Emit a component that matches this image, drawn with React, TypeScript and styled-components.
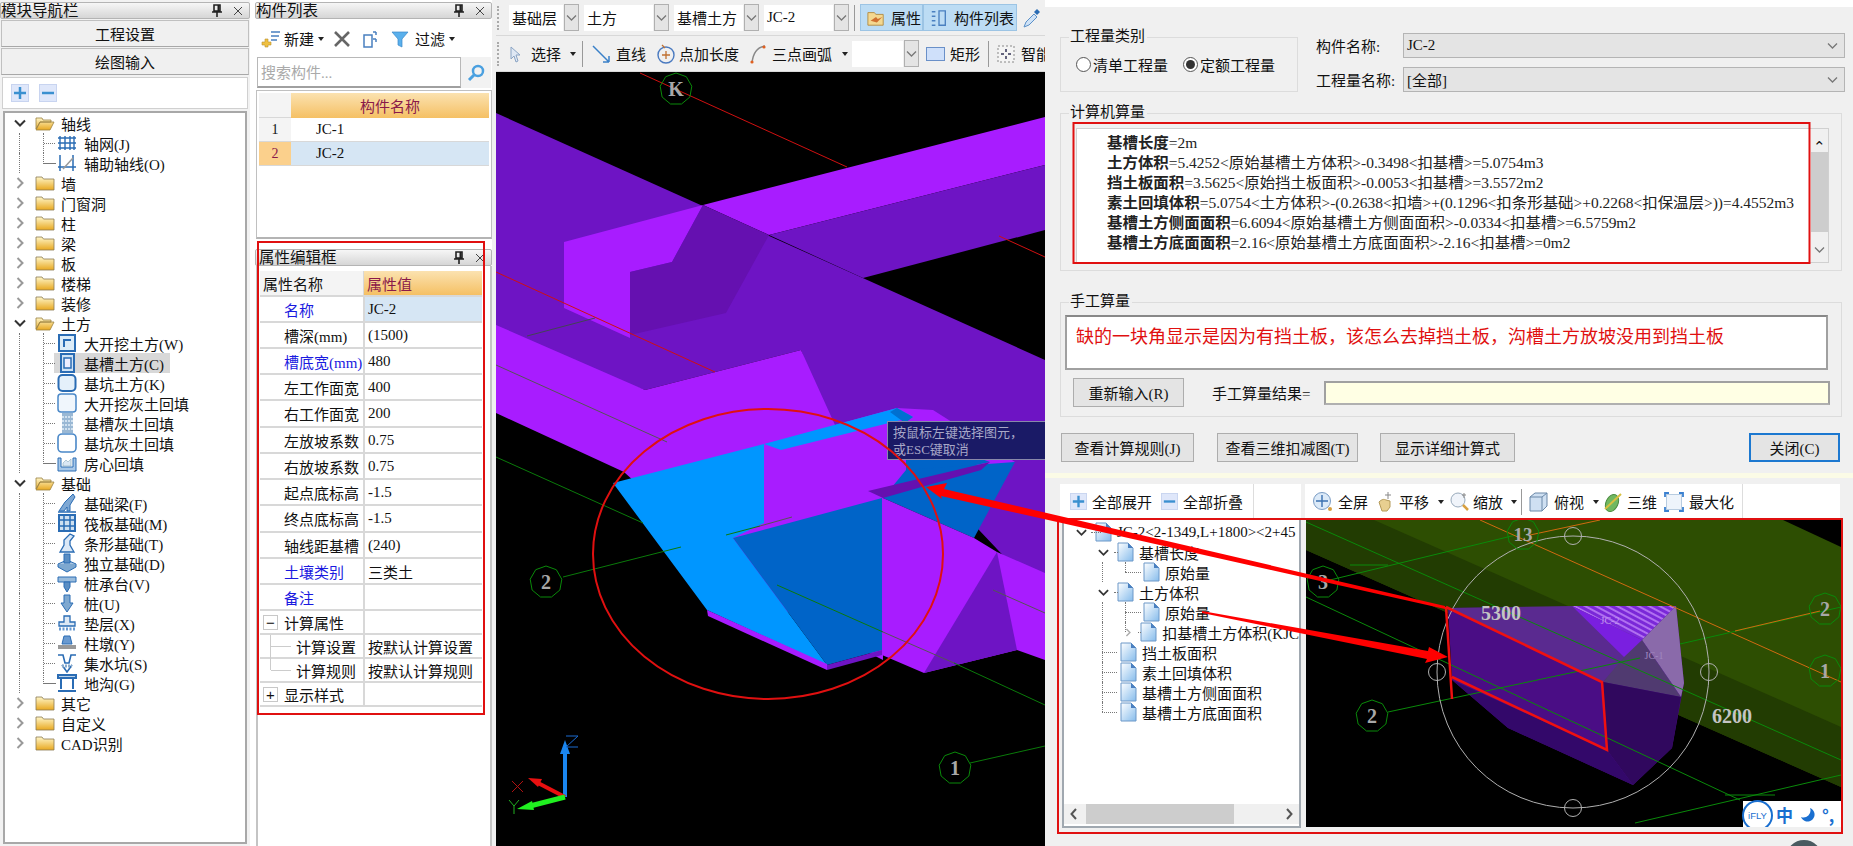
import React from 'react';
import styled, { createGlobalStyle } from 'styled-components';

const UI = '"Liberation Serif", "Noto Sans CJK SC", serif';
const Global = createGlobalStyle`
  html, body { margin: 0; padding: 0; background: #fff; }
  body { font-family: ${UI}; font-size: 15px; color: #111; }
  * { box-sizing: border-box; }
`;

const Page = styled.div`
  position: relative; display: flex; width: 1853px; height: 846px; overflow: hidden; background: #fff;
`;

/* ---------- docking panels ---------- */
const NavColumn = styled.div`
  width: 250px; flex: none; padding-top: 2px; display: flex; flex-direction: column; background: #f2f2f2;
`;
const MidColumn = styled.div`
  width: 237px; flex: none; margin-left: 5px; padding-top: 2px; display: flex; flex-direction: column;
`;
const TitleBar = styled.div`
  height: 17px; flex: none; display: flex; align-items: center; justify-content: space-between;
  background: linear-gradient(#f6f6f6, #d6d6d6); border: 1px solid #b4b4b4; border-radius: 2px;
  font-size: 15.5px; line-height: 15px; white-space: nowrap; padding-right: 5px; overflow: hidden;
`;
const TitleIcons = styled.div`display: flex; align-items: center; gap: 10px;`;
const NavButton = styled.div`
  height: 27px; margin: 1px 1px 0; flex: none; display: flex; align-items: center; justify-content: center;
  background: #f0f0f0; border: 1px solid #c0c0c0; border-bottom-color: #a8a8a8; font-size: 15px;
`;
const ExpandBar = styled.div`
  height: 32px; margin: 2px 2px 0; flex: none; background: #fff; display: flex; align-items: center; gap: 10px; padding-left: 8px;
  border: 1px solid #d0d0d0;
`;
const TreeBox = styled.div`
  flex: 1; margin: 2px 3px 2px; background: #fff; border: 2px solid #a8a8a8; border-bottom-width: 2px;
`;
const RootRow = styled.div`
  height: 20px; display: flex; align-items: center; padding-left: 5px; gap: 0; position: relative;
`;
const Chevron = styled.span`width: 20px; flex: none; display: flex; justify-content: center;`;
const FolderSlot = styled.span`margin-left: 5px; display: flex;`;
const RootLabel = styled.span`margin-left: 6px; font-size: 15px; white-space: nowrap;`;
const ChildRow = styled.div<{ $last?: boolean }>`
  height: 20px; display: flex; align-items: center; padding-left: 49px; position: relative;
  &::before { content: ''; position: absolute; left: 14px; top: 0; bottom: 0; border-left: 1px dotted #777; }
  &::after { content: ''; position: absolute; left: 38px; top: 0; width: 12px; height: ${p => (p.$last ? '10px' : '20px')};
    border-left: 1px dotted #777; border-bottom: ${p => (p.$last ? '1px dotted #777' : 'none')}; }
`;
const Tick = styled.i`position: absolute; left: 39px; top: 10px; width: 11px; border-top: 1px dotted #777;`;
const Chip = styled.span<{ $on?: boolean }>`
  display: flex; align-items: center; height: 20px; padding: 0 6px 0 3px; gap: 7px; white-space: nowrap; font-size: 15px;
  background: ${p => (p.$on ? '#d8d8d8' : 'transparent')};
`;

const ListBar = styled.div`
  height: 33px; margin-top: 3px; display: flex; align-items: center; background: #fff; padding-left: 6px; font-size: 15px; flex: none;
`;
const BarText = styled.span<{ $ml?: number }>`margin-left: ${p => p.$ml ?? 3}px; white-space: nowrap;`;
const BarSlot = styled.span<{ $ml: number }>`margin-left: ${p => p.$ml}px; display: flex;`;
const Caret = styled.span`
  display: inline-block; width: 0; height: 0; border-left: 3.5px solid transparent; border-right: 3.5px solid transparent;
  border-top: 4px solid #222; margin-left: 4px; flex: none;
`;
const SearchRow = styled.div`height: 31px; flex: none; display: flex; margin: 2px 1px 0 2px; background: #f2f2f2;`;
const SearchInput = styled.div`
  width: 204px; background: #fff; border: 1px solid #b8b8b8; border-bottom: 2px solid #a0a0a0; color: #aaa; font-size: 15px; padding: 3px 3px;
`;
const SearchBtn = styled.div`flex: 1; display: flex; align-items: center; justify-content: center;`;
const ListBox = styled.div`
  height: 149px; flex: none; margin: 2px 0 0 1px; background: #fff; border: 1px solid #c0c0c0; border-bottom: 2px solid #b4b4b4; padding: 2px 2px 0 2px;
`;
const ListHead = styled.div`display: flex; height: 25px;`;
const IndexCell = styled.div<{ $active?: boolean }>`
  width: 32px; flex: none; display: flex; align-items: center; justify-content: center; font-size: 14px;
  background: ${p => (p.$active ? '#fbd08c' : '#f4f4f4')}; border-bottom: 1px solid #d8d8d8; color: ${p => (p.$active ? '#8a1a4a' : '#111')};
`;
const OrangeHead = styled.div`
  flex: 1; display: flex; align-items: center; justify-content: center; color: #8a1a4a; font-size: 15px;
  background: linear-gradient(#fbe2b0, #f5c064);
`;
const ListRow = styled.div`display: flex; height: 24px;`;
const ListName = styled.div<{ $active?: boolean }>`
  flex: 1; display: flex; align-items: center; padding-left: 25px; font-size: 15px;
  background: ${p => (p.$active ? '#d6e6f4' : '#fff')}; border-bottom: 1px solid #d8d8d8;
`;
const PropTitle = styled(TitleBar)`margin-top: 10px; padding-left: 3px;`;
const PropBody = styled.div`
  flex: 1; margin: 0 0 0 1px; background: #fff; border-left: 2px solid #c4c4c4; border-right: 2px solid #c4c4c4; padding: 5px 0 0 2px;
`;
const PropHead = styled.div`display: grid; grid-template-columns: 103px 119px; height: 26px; border-bottom: 2px solid #d8d8d8; width: 222px;`;
const PropHeadName = styled.div`background: #f4f4f4; padding-left: 3px; display: flex; align-items: center; font-size: 15px;`;
const PropHeadVal = styled.div`background: linear-gradient(#fbe2b0, #f5c064); color: #8a1a4a; padding-left: 3px; display: flex; align-items: center; font-size: 15px; border-left: 1px solid #d8d8d8;`;
const PropRow = styled.div<{ $h?: number }>`
  display: grid; grid-template-columns: 103px 119px; width: 222px; height: ${p => p.$h ?? 26}px; border-bottom: 2px solid #d8d8d8;
`;
const PropName = styled.div<{ $blue?: boolean; $indent?: number }>`
  padding-left: ${p => p.$indent ?? 24}px; display: flex; align-items: center; white-space: nowrap; font-size: 15px; position: relative;
  color: ${p => (p.$blue ? '#1a1ae0' : '#111')};
`;
const PropVal = styled.div<{ $sel?: boolean }>`
  padding-left: 3px; display: flex; align-items: center; white-space: nowrap; font-size: 15px; border-left: 2px solid #d8d8d8;
  background: ${p => (p.$sel ? '#d6e6f4' : '#fff')};
`;
const Toggle = styled.span`
  position: absolute; left: 3px; top: 4px; width: 15px; height: 15px; border: 1px solid #c8c8c8; display: flex; align-items: center; justify-content: center;
  font-size: 15px; line-height: 13px; font-family: "Liberation Sans", sans-serif; background: #fff;
`;
const Branch = styled.i<{ $end?: boolean }>`
  position: absolute; left: 10px; top: 0; width: 22px; height: ${p => (p.$end ? '11px' : '24px')}; border-left: 1px solid #ccc;
  &::after { content: ''; position: absolute; left: 0; top: 11px; width: 20px; border-top: 1px solid #ccc; }
`;

/* ---------- centre ---------- */
const Center = styled.div`
  width: 553px; flex: none; display: flex; flex-direction: column; padding-left: 4px; background: #f0f0f0;
`;
const ToolRow = styled.div<{ $h: number }>`
  height: ${p => p.$h}px; flex: none; display: flex; align-items: center; font-size: 15px; position: relative; overflow: hidden; white-space: nowrap; border-bottom: 1px solid #d8d8d8;
`;
const Grip = styled.i`width: 3px; height: 24px; margin: 0 9px 0 1px; flex: none; border-left: 2px dotted #aaa;`;
const Combo = styled.div<{ $w: number; $ml?: number }>`
  width: ${p => p.$w}px; height: 26px; flex: none; background: #fff; display: flex; align-items: center; padding-left: 3px; font-size: 15px; margin-left: ${p => p.$ml ?? 0}px;
`;
const ComboBtn = styled.div`
  width: 15px; height: 27px; flex: none; display: flex; align-items: center; justify-content: center; background: #e4e4e4; border: 1px solid #b0b0b0; margin-left: 1px;
`;
const VSep = styled.i<{ $mx?: number }>`width: 1px; height: 26px; flex: none; background: #999; margin: 0 ${p => p.$mx ?? 5}px;`;
const ActiveBtn = styled.div<{ $w: number }>`
  width: ${p => p.$w}px; height: 27px; flex: none; display: flex; align-items: center; gap: 5px; padding-left: 5px; background: #bcdcf4; border: 1px solid #9cc4e4;
`;
const TB = styled.div<{ $w?: number; $gap?: number; $ml?: number }>`
  display: flex; align-items: center; flex: none; gap: ${p => p.$gap ?? 5}px; width: ${p => (p.$w ? p.$w + 'px' : 'auto')}; margin-left: ${p => p.$ml ?? 0}px;
`;
const CanvasWrap = styled.div`position: relative; flex: 1; background: #000; overflow: hidden;`;
const CanvasSvg = styled.svg`display: block;`;
const Hint = styled.div`
  position: absolute; left: 391px; top: 349px; width: 170px; height: 39px; background: #1a1a66; border: 1px solid #8888aa; color: #a8a8c8;
  font-size: 13px; line-height: 17px; padding: 2px 5px; white-space: nowrap;
`;

/* ---------- dialog ---------- */
const Dialog = styled.div`
  width: 808px; flex: none; background: #f0f0f0; display: flex; flex-direction: column;
`;
const WhiteStrip = styled.div`height: 7px; flex: none; background: #fff;`;
const TopRow = styled.div`display: flex; margin: 30px 0 0 15px; height: 55px;`;
const Group = styled.div<{ $w?: number; $h: number; $mt?: number; $ml?: number }>`
  position: relative; width: ${p => (p.$w ? p.$w + 'px' : 'auto')}; height: ${p => p.$h}px; border: 1px solid #dcdcdc; flex: none; margin-top: ${p => p.$mt ?? 0}px; margin-left: ${p => p.$ml ?? 0}px;
`;
const GroupWide = styled(Group)`width: 782px;`;
const Legend = styled.span`
  position: absolute; left: 8px; top: -10px; background: #f0f0f0; padding: 0 2px 0 1px; font-size: 15px; line-height: 17px; white-space: nowrap;
`;
const RadioRow = styled.div`display: flex; align-items: center; margin: 16px 0 0 15px; font-size: 15px; white-space: nowrap;`;
const RadioGap = styled.span`width: 15px;`;
const Radio = styled.span<{ $on?: boolean }>`
  width: 15px; height: 15px; border-radius: 50%; border: 1px solid #555; background: #fff; flex: none; margin-right: 2px; display: flex; align-items: center; justify-content: center;
  &::after { content: ''; width: 9px; height: 9px; border-radius: 50%; background: ${p => (p.$on ? '#333' : 'transparent')}; }
`;
const Fields = styled.div`margin-left: 18px; margin-top: -4px; display: flex; flex-direction: column; gap: 9px;`;
const Field = styled.div`display: flex; align-items: center; height: 25px;`;
const FieldLabel = styled.span`width: 87px; flex: none; font-size: 15px; white-space: nowrap;`;
const FieldSelect = styled.div`
  width: 442px; height: 25px; background: #e4e4e4; border: 1px solid #b4b4b4; display: flex; align-items: center; justify-content: space-between; padding: 0 6px 0 3px; font-size: 15px;
`;
const CalcBox = styled.div`
  position: absolute; left: 15px; top: 14px; width: 753px; height: 135px; background: #fff; border: 1px solid #d0d0d0; padding: 4px 0 0 30px; font-size: 15px; line-height: 20px; white-space: nowrap;
`;
const CalcLine = styled.div`height: 20px; color: #222; transform-origin: left; transform: scaleX(1.03);`;
const CalcScroll = styled.div`
  position: absolute; right: 0; top: 0; bottom: 0; width: 17px; background: #f0f0f0; display: flex; flex-direction: column; justify-content: space-between; align-items: center; padding: 8px 0;
`;
const CalcThumb = styled.i`position: absolute; left: 0; top: 23px; width: 17px; height: 80px; background: #cdcdcd;`;
const Manual = styled.div`
  position: absolute; left: 4px; top: 12px; width: 763px; height: 55px; background: #fff; border: 2px solid #a0a0a0; border-top-color: #888; color: #e01010;
  font-family: "Noto Sans CJK SC", sans-serif; font-size: 18px; line-height: 24px; padding: 6px 9px; white-space: nowrap;
`;
const ManualRow = styled.div`position: absolute; left: 12px; top: 75px; display: flex; align-items: center;`;
const ResultLabel = styled.span`margin-left: 28px; width: 109px; white-space: nowrap; font-size: 15px;`;
const Btn = styled.div<{ $w: number; $h?: number; $ml?: number; $primary?: boolean }>`
  width: ${p => p.$w}px; height: ${p => p.$h ?? 29}px; flex: none; margin-left: ${p => p.$ml ?? 0}px; display: flex; align-items: center; justify-content: center; white-space: nowrap;
  background: #e4e4e4; border: ${p => (p.$primary ? '2px solid #1c78d0' : '1px solid #adadad')}; font-size: 15px;
`;
const ResultInput = styled.div`width: 506px; height: 24px; margin-left: 3px; background: #ffffe4; border: 2px solid #a0a0a0; border-bottom-color: #b0b0b0; flex: none;`;
const ButtonRow = styled.div`display: flex; margin: 16px 0 0 16px;`;
const CreamBand = styled.div`height: 5px; flex: none; margin-top: 11px; background: #fbfbe6;`;
const StripRow = styled.div`display: flex; margin: 6px 0 0 15px; height: 35px; flex: none;`;
const LeftStrip = styled.div`
  width: 241px; flex: none; background: #fff; display: flex; align-items: center; padding-left: 10px; font-size: 15px; white-space: nowrap; position: relative;
`;
const StripText = styled.span`margin-left: 5px;`;
const StripSlot = styled.span`margin-left: 9px; display: flex;`;
const StripDivider = styled.i`position: absolute; left: 193px; top: 0; bottom: 0; width: 1px; background: #ddd;`;
const RightStrip = styled.div`
  width: 535px; flex: none; margin-left: 4px; background: #fff; display: flex; align-items: center; padding-left: 7px; font-size: 15px; white-space: nowrap; position: relative;
`;
const StripDividerR = styled.i`position: absolute; left: 437px; top: 0; bottom: 0; width: 1px; background: #ddd;`;
const PaneRow = styled.div`display: flex; margin: 0 0 0 17px; height: 309px; flex: none;`;
const DocTree = styled.div`
  width: 239px; flex: none; background: #fff; border: 2px solid #a0a8b0; border-top: none; position: relative; overflow: hidden;
`;
const DocRow = styled.div<{ $pad: number }>`
  height: 20px; display: flex; align-items: center; padding-left: ${p => p.$pad}px; font-size: 15px; white-space: nowrap; gap: 4px; position: relative;
`;
const DocIconSlot = styled.span<{ $chev: boolean }>`margin-left: ${p => (p.$chev ? 4 : 0)}px; display: flex;`;
const DocText = styled.span`margin-left: 1px;`;
const VDots = styled.i<{ $x: number; $half?: boolean }>`
  position: absolute; left: ${p => p.$x}px; top: 0; height: ${p => (p.$half ? 10 : 20)}px; border-left: 1px dotted #777;
`;
const HDots = styled.i<{ $x: number; $w: number }>`
  position: absolute; left: ${p => p.$x}px; top: 10px; width: ${p => p.$w}px; border-top: 1px dotted #777;
`;
const DocRows = styled.div`padding-top: 3px;`;
const DocScroll = styled.div`
  position: absolute; left: 0; right: 0; bottom: 2px; height: 20px; background: #f0f0f0; display: flex; align-items: center; justify-content: space-between; padding: 0 6px;
`;
const DocThumb = styled.i`position: absolute; left: 22px; top: 0; bottom: 0; width: 148px; background: #cdcdcd;`;
const MiniCanvas = styled.div`width: 535px; height: 307px; flex: none; margin-left: 5px; margin-top: 1px; background: #000; position: relative; overflow: hidden;`;
const ImeBar = styled.div`
  position: absolute; right: 0; bottom: 0; left: 437px; height: 26px; background: #fff; display: flex; align-items: center; gap: 7px; padding-left: 33px;
  color: #1a6fd0; font-size: 17px; font-weight: 700; font-family: "Noto Sans CJK SC", sans-serif;
`;
const ImeBadge = styled.div`
  position: absolute; left: -1px; bottom: -4px; width: 31px; height: 31px; border-radius: 50%; background: #fff; border: 2px solid #1a6fd0;
  display: flex; align-items: center; justify-content: center; font-family: "Liberation Sans", sans-serif; font-size: 9.5px; font-weight: 400;
`;
const Overlay = styled.svg`position: absolute; left: 0; top: 0; width: 1853px; height: 846px; pointer-events: none; z-index: 5;`;
const Dome = styled.i`position: absolute; left: 1786px; top: 840px; width: 36px; height: 36px; border-radius: 50%; background: #4a5a60;`;
const NoShrink = styled.svg`flex: none;`;

/* ---------- icons ---------- */
const Pin = () => (
  <svg width="10" height="13" viewBox="0 0 10 13"><path d="M2 1h6v6H2zM0 8h10M5 8v5" fill="none" stroke="#222" strokeWidth="1.6" /><path d="M5.5 1h2v6h-2z" fill="#222" /></svg>
);
const CloseX = () => (
  <svg width="12" height="12" viewBox="0 0 12 12"><path d="M2 2l8 8M10 2l-8 8" stroke="#444" strokeWidth="1" /></svg>
);
const Chev = ({ open, gray, size = 12 }: { open?: boolean; gray?: boolean; size?: number }) => (
  <svg width={size} height={size} viewBox="0 0 12 12">
    <path d={open ? 'M1 3.5l5 5 5-5' : 'M3.5 1l5 5-5 5'} fill="none" stroke={gray ? '#aaa' : open ? '#333' : '#999'} strokeWidth="2" />
  </svg>
);
const Folder = ({ open }: { open?: boolean }) => (
  <NoShrink width="20" height="16" viewBox="0 0 20 16">
    <defs><linearGradient id="fg" x1="0" y1="0" x2="0" y2="1"><stop offset="0" stopColor="#fff6c8" /><stop offset="1" stopColor="#e8a820" /></linearGradient></defs>
    {open ? (
      <path d="M1 14V3h6l1 2h8v2H5L1 14zM1 15l4-8h14l-4 8z" fill="url(#fg)" stroke="#9a8040" strokeWidth=".8" />
    ) : (
      <path d="M1 15V2h6l1.500 2H19v11z" fill="url(#fg)" stroke="#8a7a50" strokeWidth=".8" />
    )}
  </NoShrink>
);
const Doc = () => (
  <NoShrink width="17" height="20" viewBox="0 0 17 20">
    <defs><linearGradient id="dg" x1="0" y1="0" x2="1" y2="1"><stop offset="0" stopColor="#fff" /><stop offset="1" stopColor="#86bcec" /></linearGradient></defs>
    <path d="M1 1h10l5 5v13H1z" fill="url(#dg)" stroke="#6c98c8" /><path d="M11 1v5h5z" fill="#4a80c0" />
  </NoShrink>
);
const B = '#2a6cb4';
const navIcons: Record<string, React.ReactNode> = {
  grid: <path d="M3 3v14M8 3v14M13 3v14M17 3v14M1 5h18M1 10h18M1 15h18" stroke={B} strokeWidth="1.4" fill="none" />,
  aux: <><path d="M3 2v16M16 2v16M1 14h18" stroke={B} strokeWidth="1.5" fill="none" /><path d="M6 16L16 5" stroke="#999" strokeWidth="1.500" /></>,
  dig: <><rect x="2" y="2" width="16" height="16" fill="#dcecf8" stroke={B} strokeWidth="2" /><path d="M7 14V7h7" fill="none" stroke={B} strokeWidth="2" /></>,
  trench: <><rect x="4" y="1" width="13" height="18" fill="#cfe2f4" stroke={B} strokeWidth="2" /><rect x="7" y="5" width="7" height="10" fill="#eef" stroke={B} strokeWidth="1.500" /></>,
  pit: <rect x="1.500" y="2" width="17" height="16" rx="4" fill="#e4f0fa" stroke={B} strokeWidth="2" />,
  bigfill: <rect x="1" y="1" width="18" height="18" rx="3" fill="#f0f6fc" stroke="#4a88c8" strokeWidth="1.500" />,
  trenchfill: <><rect x="5" y="0" width="11" height="20" fill="#9ab8d4" /><path d="M5 4h11M5 8h11M5 12h11M5 16h11" stroke="#e4eef8" strokeWidth="1.500" strokeDasharray="2 1" /></>,
  pitfill: <rect x="1" y="1" width="18" height="18" rx="4" fill="#fff" stroke="#4a88c8" strokeWidth="1.600" />,
  room: <><path d="M1 5v13h18V5h-3v9H4V5z" fill="#a8c8e8" stroke={B} /><path d="M6 10l3-3 2 2 3-3v7H6z" fill="#dbe8f4" stroke="#8ab" strokeWidth=".6" /></>,
  beam: <><path d="M2 18l6-9 8-8 2 3-5 8v6h-3v-4l-3 4z" fill="#7ea8d4" stroke={B} strokeWidth="1" /><path d="M1 19h18" stroke={B} strokeWidth="1.500" /></>,
  raft: <><rect x="2" y="2" width="16" height="16" fill="#cfe0f0" stroke={B} strokeWidth="2" /><path d="M2 7h16M2 13h16M7 2v16M13 2v16" stroke={B} strokeWidth="1.500" /></>,
  strip: <><path d="M3 19l4-7V7l6-6 4 2-4 5v4l4 7z" fill="#dbe8f6" stroke={B} strokeWidth="1.300" /></>,
  iso: <><path d="M1 11l9-4 9 4-9 6z" fill="#a8c4e0" stroke={B} /><path d="M1 11v3l9 5 9-5v-3" fill="#7ea8d0" stroke={B} /><path d="M7 1h6v9H7z" fill="#5a8ec4" stroke={B} /></>,
  cap: <><path d="M1 4h18v5H1z" fill="#9abcdc" stroke={B} /><path d="M7 9h6v5l-3 5-3-5z" fill="#5a8ec4" stroke={B} /></>,
  pile: <><path d="M7 2h6v8h3l-6 9-6-9h3z" fill="#7ea8d0" stroke={B} /></>,
  pad: <><path d="M7 3h6v6h5v4H2V9h5z" fill="#dce8f4" stroke={B} strokeWidth="1.300" /><path d="M2 16h16" stroke="#6a9ad0" strokeWidth="3" strokeDasharray="2 1.500" /></>,
  pier: <><path d="M7 3h6l2 8H5z" fill="#6a9ad0" stroke={B} /><path d="M1 12h18v4H1z" fill="#999" /></>,
  sump: <><path d="M1 2h5l2 8h4l2-8h5M5 12l5 7 5-7" fill="none" stroke={B} strokeWidth="1.600" /><path d="M5 13h10" stroke="#8ac" strokeWidth="3" strokeDasharray="2 1" /></>,
  ditch: <><path d="M1 2h18v3H1zM4 5v11M16 5v11M1 18h18" fill="#bcd4ea" stroke={B} strokeWidth="2" /></>,
};
const NavIcon = ({ kind }: { kind: string }) => (
  <NoShrink width="20" height="20" viewBox="0 0 20 20">{navIcons[kind]}</NoShrink>
);
const PlusBox = ({ minus, size = 18 }: { minus?: boolean; size?: number }) => (
  <NoShrink width={size} height={size} viewBox="0 0 18 18">
    <rect x=".5" y=".5" width="17" height="17" fill="#dfe7fa" stroke="#c8d4f0" />
    <path d={minus ? 'M3 9h12' : 'M3 9h12M9 3v12'} stroke="#3a90d0" strokeWidth="2.500" />
  </NoShrink>
);
const Mini = ({ d, w = 20, h = 20, children }: { d?: string; w?: number; h?: number; children?: React.ReactNode }) => (
  <NoShrink width={w} height={h} viewBox="0 0 20 20">{d && <path d={d} fill="none" stroke="#4a80c0" strokeWidth="1.500" />}{children}</NoShrink>
);
const SmallChev = () => (
  <svg width="11" height="8" viewBox="0 0 11 8"><path d="M1 1.500l4.500 4.500L10 1.500" fill="none" stroke="#777" strokeWidth="1.300" /></svg>
);

const ngon = (cx: number, cy: number, r: number, n = 9) =>
  Array.from({ length: n }, (_, i) => {
    const a = (i / n) * Math.PI * 2 - Math.PI / 2;
    return `${(cx + r * Math.cos(a)).toFixed(1)},${(cy + r * Math.sin(a)).toFixed(1)}`;
  }).join(' ');

const AxisTag = ({ x, y, t, r = 16, fs = 20 }: { x: number; y: number; t: string; r?: number; fs?: number }) => (
  <g>
    <polygon points={ngon(x, y, r)} fill="none" stroke="#0a8a0a" strokeWidth="1" />
    <text x={x} y={y + fs * 0.35} textAnchor="middle" fontSize={fs} fontWeight="700" fill="#a8a8a8" fontFamily='"Liberation Serif", serif'>{t}</text>
  </g>
);
type L = [number, number, number, number, string];
const Lines = ({ items, w = 1 }: { items: L[]; w?: number }) => (
  <>{items.map((l, i) => <line key={i} x1={l[0]} y1={l[1]} x2={l[2]} y2={l[3]} stroke={l[4]} strokeWidth={w} />)}</>
);

const LT = '#a81cff';
const DK = '#6e14c4';
const DK2 = '#6510b0';
const polys: [string, string][] = [
  ['496,113 1045,360 1045,600 979,530 897,440 835,445 801,350 645,390 496,340', DK],
  ['703,205 1045,117 1045,165 769,235', LT],
  ['769,235 1045,165 1045,230 863,278', DK],
  ['564,242 703,205 672,262 630,272 630,338 564,308', LT],
  ['630,272 672,262 703,205 769,235 726,313 630,335', DK2],
  ['496,325 645,390 801,350 835,425 897,408 933,410 1015,462 883,498 883,660 764,600 624,472 496,413', LT],
  ['764,444 897,408 913,417 781,450', '#0096ff'],
  ['897,408 913,417 905,423 890,412', '#0070d0'],
  ['906,432 990,462 906,480', '#0064c8'],
  ['883,498 906,470 1015,462 974,538', '#0064c8'],
  ['868,491 990,462 981,470 883,498', DK2],
  ['613,483 764,444 764,523 733,538 827,665 707,610', '#0096ff'],
  ['733,538 882,498 882,650 827,665', '#0064c8'],
  ['707,610 827,664 827,670 708,616', LT],
  ['827,665 882,650 882,655 827,670', DK],
  ['883,498 974,538 997,552 1045,573 1045,660 1017,650 924,673 882,655', LT],
  ['997,552 1017,650 924,673', DK],
];

const navTree: { t: string; open?: boolean; kids?: [string, string, boolean?][] }[] = [
  { t: '轴线', open: true, kids: [['grid', '轴网(J)'], ['aux', '辅助轴线(O)']] },
  { t: '墙' }, { t: '门窗洞' }, { t: '柱' }, { t: '梁' }, { t: '板' }, { t: '楼梯' }, { t: '装修' },
  { t: '土方', open: true, kids: [['dig', '大开挖土方(W)'], ['trench', '基槽土方(C)', true], ['pit', '基坑土方(K)'], ['bigfill', '大开挖灰土回填'], ['trenchfill', '基槽灰土回填'], ['pitfill', '基坑灰土回填'], ['room', '房心回填']] },
  { t: '基础', open: true, kids: [['beam', '基础梁(F)'], ['raft', '筏板基础(M)'], ['strip', '条形基础(T)'], ['iso', '独立基础(D)'], ['cap', '桩承台(V)'], ['pile', '桩(U)'], ['pad', '垫层(X)'], ['pier', '柱墩(Y)'], ['sump', '集水坑(S)'], ['ditch', '地沟(G)']] },
  { t: '其它' }, { t: '自定义' }, { t: 'CAD识别' },
];
const propRows: [string, string, boolean?][] = [
  ['名称', 'JC-2', true], ['槽深(mm)', '(1500)'], ['槽底宽(mm)', '480', true], ['左工作面宽', '400'], ['右工作面宽', '200'],
  ['左放坡系数', '0.75'], ['右放坡系数', '0.75'], ['起点底标高', '-1.5'], ['终点底标高', '-1.5'], ['轴线距基槽', '(240)'],
  ['土壤类别', '三类土', true], ['备注', '', true],
];
const calc: [string, string][] = [
  ['基槽长度', '=2m'],
  ['土方体积', '=5.4252<原始基槽土方体积>-0.3498<扣基槽>=5.0754m3'],
  ['挡土板面积', '=3.5625<原始挡土板面积>-0.0053<扣基槽>=3.5572m2'],
  ['素土回填体积', '=5.0754<土方体积>-(0.2638<扣墙>+(0.1296<扣条形基础>+0.2268<扣保温层>))=4.4552m3'],
  ['基槽土方侧面面积', '=6.6094<原始基槽土方侧面面积>-0.0334<扣基槽>=6.5759m2'],
  ['基槽土方底面面积', '=2.16<原始基槽土方底面面积>-2.16<扣基槽>=0m2'],
];
type DocLink = { v38?: 'full' | 'half'; v61?: 'full' | 'half'; h?: [number, number] };
const docRows: { pad: number; t: string; chev: 'open' | 'closed' | 'none'; link: DocLink }[] = [
  { pad: 12, t: 'JC-2<2-1349,L+1800><2+45', chev: 'open', link: { h: [27, 10] } },
  { pad: 34, t: '基槽长度', chev: 'open', link: { h: [50, 4] } },
  { pad: 79, t: '原始量', chev: 'none', link: { v38: 'full', v61: 'half', h: [61, 16] } },
  { pad: 34, t: '土方体积', chev: 'open', link: { h: [50, 4] } },
  { pad: 79, t: '原始量', chev: 'none', link: { v38: 'full', v61: 'full', h: [61, 16] } },
  { pad: 60, t: '扣基槽土方体积(KJC', chev: 'closed', link: { v38: 'full', v61: 'half', h: [74, 3] } },
  { pad: 56, t: '挡土板面积', chev: 'none', link: { v38: 'full', h: [38, 15] } },
  { pad: 56, t: '素土回填体积', chev: 'none', link: { v38: 'full', h: [38, 15] } },
  { pad: 56, t: '基槽土方侧面面积', chev: 'none', link: { v38: 'full', h: [38, 15] } },
  { pad: 56, t: '基槽土方底面面积', chev: 'none', link: { v38: 'half', h: [38, 15] } },
];

export default function App() {
  return (
    <Page>
      <Global />
      <NavColumn>
        <TitleBar>模块导航栏<TitleIcons><Pin /><CloseX /></TitleIcons></TitleBar>
        <NavButton>工程设置</NavButton>
        <NavButton>绘图输入</NavButton>
        <ExpandBar><PlusBox /><PlusBox minus /></ExpandBar>
        <TreeBox>
          {navTree.map(n => (
            <React.Fragment key={n.t}>
              <RootRow>
                <Chevron><Chev open={n.open} /></Chevron>
                <FolderSlot><Folder open={n.open} /></FolderSlot>
                <RootLabel>{n.t}</RootLabel>
              </RootRow>
              {n.kids?.map((k, i) => (
                <ChildRow key={k[1]} $last={i === n.kids!.length - 1}>
                  <Tick />
                  <Chip $on={k[2]}><NavIcon kind={k[0]} />{k[1]}</Chip>
                </ChildRow>
              ))}
            </React.Fragment>
          ))}
        </TreeBox>
      </NavColumn>

      <MidColumn>
        <TitleBar>构件列表<TitleIcons><Pin /><CloseX /></TitleIcons></TitleBar>
        <ListBar>
          <Mini d="M10 3h9M10 7h8M10 11h6">
            <path d="M1 15h3v-3h3v3h3v3H7v2H4v-2H1z" fill="#f0c040" stroke="#b89030" strokeWidth=".6" transform="translate(0 -2)" />
          </Mini>
          <BarText>新建</BarText><Caret />
          <BarSlot $ml={9}>
            <svg width="18" height="18" viewBox="0 0 18 18"><path d="M2 2l14 14M16 2L2 16" stroke="#666" strokeWidth="2.600" /></svg>
          </BarSlot>
          <BarSlot $ml={11}>
            <Mini d="M2 6h8v12H2zM11 3h3M14 3v3M11 10h3M14 10v3" />
          </BarSlot>
          <BarSlot $ml={9}>
            <svg width="18" height="18" viewBox="0 0 18 18"><path d="M1 2h16l-6 7v8l-4-2V9z" fill="#5ab0ec" stroke="#3a88c8" strokeWidth=".7" /></svg>
          </BarSlot>
          <BarText $ml={6}>过滤</BarText><Caret />
        </ListBar>
        <SearchRow>
          <SearchInput>搜索构件...</SearchInput>
          <SearchBtn>
            <svg width="18" height="18" viewBox="0 0 18 18"><circle cx="11" cy="7" r="5" fill="none" stroke="#4aa0e0" strokeWidth="2.500" /><path d="M7 11l-5 5" stroke="#4aa0e0" strokeWidth="3" /></svg>
          </SearchBtn>
        </SearchRow>
        <ListBox>
          <ListHead><IndexCell /><OrangeHead>构件名称</OrangeHead></ListHead>
          <ListRow><IndexCell>1</IndexCell><ListName>JC-1</ListName></ListRow>
          <ListRow><IndexCell $active>2</IndexCell><ListName $active>JC-2</ListName></ListRow>
        </ListBox>
        <PropTitle>属性编辑框<TitleIcons><Pin /><CloseX /></TitleIcons></PropTitle>
        <PropBody>
          <PropHead><PropHeadName>属性名称</PropHeadName><PropHeadVal>属性值</PropHeadVal></PropHead>
          {propRows.map((r, i) => (
            <PropRow key={r[0]} $h={i === 4 || i === 8 ? 27 : 26}>
              <PropName $blue={r[2]}>{r[0]}</PropName>
              <PropVal $sel={i === 0}>{r[1]}</PropVal>
            </PropRow>
          ))}
          <PropRow $h={24}><PropName><Toggle>−</Toggle>计算属性</PropName><PropVal /></PropRow>
          <PropRow $h={24}><PropName $indent={36}><Branch />计算设置</PropName><PropVal>按默认计算设置</PropVal></PropRow>
          <PropRow $h={24}><PropName $indent={36}><Branch $end />计算规则</PropName><PropVal>按默认计算规则</PropVal></PropRow>
          <PropRow $h={24}><PropName><Toggle>+</Toggle>显示样式</PropName><PropVal /></PropRow>
        </PropBody>
      </MidColumn>

      <Center>
        <ToolRow $h={36}>
          <Grip />
          <Combo $w={54}>基础层</Combo><ComboBtn><SmallChev /></ComboBtn>
          <Combo $w={69} $ml={5}>土方</Combo><ComboBtn><SmallChev /></ComboBtn>
          <Combo $w={69} $ml={5}>基槽土方</Combo><ComboBtn><SmallChev /></ComboBtn>
          <Combo $w={69} $ml={5}>JC-2</Combo><ComboBtn><SmallChev /></ComboBtn>
          <VSep />
          <ActiveBtn $w={63}>
            <Mini w={20} h={18}><path d="M1 4h7l2 2h8v12H1z" fill="#f4d890" stroke="#b08a40" /><path d="M4 13l6-4 2 2 5-2-6 6z" fill="#d07030" /></Mini>属性
          </ActiveBtn>
          <ActiveBtn $w={94}>
            <Mini d="M2 3h4M2 8h4M2 13h4M2 18h4M10 2h7v16h-7z" w={20} h={18} />构件列表
          </ActiveBtn>
          <BarSlot $ml={6}>
            <svg width="18" height="20" viewBox="0 0 18 20"><path d="M1 19l2-5 8-8 3 3-8 8z" fill="#cfe2f6" stroke="#5a90c8" /><path d="M11 4l3-3 3 3-3 3z" fill="#2a6cb4" /></svg>
          </BarSlot>
        </ToolRow>
        <ToolRow $h={36}>
          <Grip />
          <TB $w={22}><svg width="14" height="18" viewBox="0 0 14 18"><path d="M2 2l9 8H7l2 6-2 1-2-6-3 3z" fill="#dfe8f4" stroke="#8aa4c4" /></svg></TB>
          <TB>选择<Caret /></TB>
          <VSep $mx={6} />
          <TB $ml={3} $gap={4}><svg width="20" height="20" viewBox="0 0 20 20"><path d="M1 2l16 16M17 18v-6M17 18h-6" fill="none" stroke="#3a80c8" strokeWidth="1.500" /></svg>直线</TB>
          <TB $ml={10} $gap={3}><svg width="20" height="20" viewBox="0 0 20 20"><circle cx="10" cy="11" r="8" fill="none" stroke="#4a7ac0" strokeWidth="1.400" /><path d="M10 7v8M6 11h8M6 1l3 3" stroke="#c07030" strokeWidth="1.300" /></svg>点加长度</TB>
          <TB $ml={11} $gap={6}><svg width="16" height="20" viewBox="0 0 16 20"><path d="M2 19C3 9 7 3 15 2" fill="none" stroke="#888" strokeWidth="1.500" /><circle cx="2" cy="18" r="1.600" fill="#e06020" /><circle cx="14" cy="3" r="1.600" fill="#e06020" /></svg>三点画弧<Caret /></TB>
          <Combo $w={51} $ml={4} /><ComboBtn><SmallChev /></ComboBtn>
          <TB $ml={7} $gap={5}><svg width="19" height="14" viewBox="0 0 19 14"><rect x=".5" y=".5" width="18" height="13" fill="#cfe0fa" stroke="#6a90c8" /></svg>矩形</TB>
          <VSep $mx={8} />
          <TB $gap={6}><svg width="18" height="18" viewBox="0 0 18 18"><rect x="1" y="1" width="16" height="16" fill="#f4f4f4" stroke="#888" strokeDasharray="2 2" /><path d="M9 4v3M9 11v3M4 9h3M11 9h3" stroke="#335" strokeWidth="1.500" /></svg>智能</TB>
        </ToolRow>
        <CanvasWrap>
          <CanvasSvg width="549" height="774" viewBox="496 72 549 774">
            {polys.map((p, i) => <polygon key={i} points={p[0]} fill={p[1]} />)}
            <Lines items={[
              [640, 73, 847, 167, '#d01010'],
              [999, 236, 1045, 257, '#d01010'],
              [496, 272, 715, 372, '#d01010'],
              [527, 336, 595, 318, '#445'],
              [496, 365, 667, 442, '#555'],
              [496, 457, 643, 523, '#0a7a0a'],
              [563, 577, 681, 547, '#0a7a0a'],
              [726, 535, 760, 526, '#0a7a0a'],
              [760, 526, 792, 517, '#555'],
              [777, 585, 883, 632, '#0a7a0a'],
              [883, 632, 954, 663, '#555'],
              [954, 663, 1045, 705, '#0a7a0a'],
              [993, 590, 1045, 613, '#555'],
              [970, 763, 1045, 746, '#0a7a0a'],
            ]} />
            <AxisTag x={676} y={89} t="K" />
            <AxisTag x={546} y={582} t="2" />
            <AxisTag x={955} y={768} t="1" />
            <path d="M565 797V748" stroke="#1a86f0" strokeWidth="4" />
            <path d="M565 740l-5 14h10z" fill="#1a86f0" />
            <path d="M566 736h12M566 747h12M578 736l-12 11" stroke="#1a6ad0" fill="none" />
            <path d="M565 797L538 783" stroke="#e81010" strokeWidth="4" />
            <path d="M528 778l14 1-4 8z" fill="#e81010" />
            <path d="M512 781l11 11M523 781l-11 11" stroke="#b01010" />
            <path d="M565 797L530 806" stroke="#20f020" strokeWidth="5" />
            <path d="M517 809l15-8 2 9z" fill="#20f020" />
            <path d="M509 800l5 6 5-6M514 806v8" stroke="#20b020" fill="none" />
          </CanvasSvg>
          <Hint>按鼠标左键选择图元，<br />或ESC键取消</Hint>
        </CanvasWrap>
      </Center>

      <Dialog>
        <WhiteStrip />
        <TopRow>
          <Group $w={238} $h={55}>
            <Legend>工程量类别</Legend>
            <RadioRow>
              <Radio />清单工程量<RadioGap /><Radio $on />定额工程量
            </RadioRow>
          </Group>
          <Fields>
            <Field><FieldLabel>构件名称:</FieldLabel><FieldSelect>JC-2<SmallChev /></FieldSelect></Field>
            <Field><FieldLabel>工程量名称:</FieldLabel><FieldSelect>[全部]<SmallChev /></FieldSelect></Field>
          </Fields>
        </TopRow>
        <GroupWide $h={158} $mt={21} $ml={15}>
          <Legend>计算机算量</Legend>
          <CalcBox>
            {calc.map(c => <CalcLine key={c[0]}><b>{c[0]}</b>{c[1]}</CalcLine>)}
            <CalcScroll><CalcThumb /><span>⌃</span><SmallChev /></CalcScroll>
          </CalcBox>
        </GroupWide>
        <GroupWide $h={115} $mt={31} $ml={15}>
          <Legend>手工算量</Legend>
          <Manual>缺的一块角显示是因为有挡土板，该怎么去掉挡土板，沟槽土方放坡没用到挡土板</Manual>
          <ManualRow>
            <Btn $w={111}>重新输入(R)</Btn>
            <ResultLabel>手工算量结果=</ResultLabel>
            <ResultInput />
          </ManualRow>
        </GroupWide>
        <ButtonRow>
          <Btn $w={133}>查看计算规则(J)</Btn>
          <Btn $w={141} $ml={23}>查看三维扣减图(T)</Btn>
          <Btn $w={135} $ml={22}>显示详细计算式</Btn>
          <Btn $w={91} $ml={234} $primary>关闭(C)</Btn>
        </ButtonRow>
        <CreamBand />
        <StripRow>
          <LeftStrip>
            <PlusBox size={17} /><StripText>全部展开</StripText>
            <StripSlot><PlusBox minus size={17} /></StripSlot><StripText>全部折叠</StripText>
            <StripDivider />
          </LeftStrip>
          <RightStrip>
            <TB $w={64}><svg width="21" height="21" viewBox="0 0 21 21"><circle cx="10" cy="10" r="8.500" fill="#dceaf8" stroke="#7a9cc4" /><path d="M10 4v12M4 10h12" stroke="#3a70b0" strokeWidth="1.400" /><circle cx="18" cy="18" r="2" fill="#d8a040" /></svg>全屏</TB>
            <TB $gap={5}><svg width="18" height="21" viewBox="0 0 18 21"><path d="M3 11c3-3 5-3 7-2l4 1v6l-3 4H6z" fill="#e8cf90" stroke="#b49a58" /><path d="M12 1v7M9 4h6" stroke="#888" /></svg>平移<Caret /></TB>
            <TB $gap={4} $ml={5}><svg width="20" height="21" viewBox="0 0 20 21"><circle cx="9" cy="9" r="7" fill="#f0f4fa" stroke="#9ab" /><path d="M14 14l5 5" stroke="#d8a040" strokeWidth="2.500" /><path d="M15 2v5M13 4h4" stroke="#888" /></svg>缩放<Caret /></TB>
            <VSep $mx={4} />
            <TB $gap={5} $ml={2}><svg width="21" height="22" viewBox="0 0 21 22"><path d="M2 6l5-4h12v13l-5 5H2z" fill="#cfe0f2" stroke="#6a88a8" /><path d="M2 6h12v14M14 6l5-4" fill="none" stroke="#6a88a8" /></svg>俯视<Caret /></TB>
            <TB $gap={5} $ml={5}><svg width="18" height="22" viewBox="0 0 18 22"><ellipse cx="8" cy="12" rx="6" ry="9" transform="rotate(25 8 12)" fill="#70b860" stroke="#4a8a40" /><path d="M1 18L17 3" stroke="#d8c040" strokeWidth="2" /></svg>三维</TB>
            <TB $gap={5} $ml={7}><svg width="20" height="20" viewBox="0 0 20 20"><rect x="2.500" y="2.500" width="15" height="15" fill="#eef4fb" stroke="#b8cce0" /><path d="M1 5V1h4M15 1h4v4M19 15v4h-4M5 19H1v-4" fill="none" stroke="#3a80d0" strokeWidth="1.800" /></svg>最大化</TB>
            <StripDividerR />
          </RightStrip>
        </StripRow>
        <PaneRow>
          <DocTree>
            <DocRows>
              {docRows.map((r, i) => (
                <DocRow key={i} $pad={r.pad}>
                  {r.link.v38 && <VDots $x={38} $half={r.link.v38 === 'half'} />}
                  {r.link.v61 && <VDots $x={61} $half={r.link.v61 === 'half'} />}
                  {r.link.h && <HDots $x={r.link.h[0]} $w={r.link.h[1]} />}
                  {r.chev !== 'none' && <Chev open={r.chev === 'open'} gray={r.chev === 'closed'} size={11} />}
                  <DocIconSlot $chev={r.chev !== 'none'}><Doc /></DocIconSlot>
                  <DocText>{r.t}</DocText>
                </DocRow>
              ))}
            </DocRows>
            <DocScroll>
              <DocThumb />
              <svg width="8" height="12" viewBox="0 0 8 12"><path d="M6 1L1.500 6 6 11" fill="none" stroke="#555" strokeWidth="2" /></svg>
              <svg width="8" height="12" viewBox="0 0 8 12"><path d="M2 1l4.500 5L2 11" fill="none" stroke="#555" strokeWidth="2" /></svg>
            </DocScroll>
          </DocTree>
          <MiniCanvas>
            <CanvasSvg width="535" height="307" viewBox="1306 520 535 307">
              <defs>
                <pattern id="hatch" width="5" height="5" patternUnits="userSpaceOnUse" patternTransform="rotate(28)">
                  <rect width="5" height="5" fill="#7a28d8" />
                  <rect width="5" height="2" fill="#b070f0" />
                </pattern>
              </defs>
              <polygon points="1306,520 1783,520 1841,547 1841,787 1306,550" fill="#2d4e02" />
              <polygon points="1306,520 1374,520 1841,727 1841,787 1306,550" fill="#223c02" />
              <polygon points="1448,608 1676,606 1684,683 1672,748 1633,785 1508,728 1452,680" fill="#4a0d85" />
              <polygon points="1448,608 1572,606 1642,640 1603,682" fill="#5a2a90" />
              <polygon points="1572,606 1676,606 1642,640" fill="url(#hatch)" />
              <polygon points="1572,606 1642,640 1681,697 1624,657" fill="#7a1fe0" />
              <polygon points="1676,606 1684,683 1681,697 1642,640" fill="#8a6aaa" />
              <polygon points="1603,682 1624,657 1642,640 1681,697" fill="#503a70" />
              <polygon points="1603,682 1681,697 1672,748 1633,785 1607,750" fill="#30085e" />
              <polygon points="1452,680 1607,750 1633,785 1508,728" fill="#33086a" />
              <Lines items={[
                [1306, 522, 1841, 760, '#0a8a0a'],
                [1306, 597, 1740, 800, '#0a8a0a'],
                [1330, 580, 1520, 534, '#0a8a0a'],
                [1388, 565, 1350, 565, '#0a8a0a'],
                [1480, 520, 1841, 682, '#d06a10'],
                [1530, 535, 1600, 520, '#d06a10'],
                [1680, 644, 1841, 607, '#0a8a0a'],
                [1735, 631, 1820, 611, '#d06a10'],
                [1388, 712, 1640, 658, '#0a8a0a'],
                [1635, 823, 1841, 775, '#0a8a0a'],
                [1725, 795, 1775, 795, '#0a8a0a'],
              ]} />
              <circle cx="1573" cy="672" r="136" fill="none" stroke="#b0b0b0" strokeWidth="1" />
              <circle cx="1573" cy="536" r="8.500" fill="none" stroke="#b0b0b0" />
              <circle cx="1573" cy="808" r="8.500" fill="none" stroke="#b0b0b0" />
              <circle cx="1437" cy="672" r="8.500" fill="none" stroke="#b0b0b0" />
              <circle cx="1709" cy="672" r="8.500" fill="none" stroke="#b0b0b0" />
              <text x="1501" y="620" textAnchor="middle" fontSize="20" fontWeight="700" fill="#c4c4c4" fontFamily='"Liberation Serif", serif'>5300</text>
              <text x="1732" y="723" textAnchor="middle" fontSize="20" fontWeight="700" fill="#c4c4c4" fontFamily='"Liberation Serif", serif'>6200</text>
              <text x="1654" y="659" textAnchor="middle" fontSize="10" fill="#a088c0" fontFamily='"Liberation Serif", serif'>JC-1</text>
              <text x="1610" y="624" textAnchor="middle" fontSize="10" fill="#c090f0" fontFamily='"Liberation Serif", serif'>JC-2</text>
              <AxisTag x={1523} y={534} t="13" fs={19} />
              <AxisTag x={1323} y={582} t="3" />
              <AxisTag x={1372} y={716} t="2" />
              <AxisTag x={1825} y={609} t="2" />
              <AxisTag x={1825} y={671} t="1" />
            </CanvasSvg>
            <ImeBar>
              <ImeBadge>iFLY</ImeBadge>中
              <svg width="15" height="15" viewBox="0 0 15 15"><path d="M10 1a7 7 0 1 1-9 9 7 7 0 0 0 9-9z" fill="#1a6fd0" /></svg>
              <span>°,</span>
            </ImeBar>
          </MiniCanvas>
        </PaneRow>
      </Dialog>
      <Dome />

      <Overlay viewBox="0 0 1853 846">
        <rect x="258" y="242" width="226" height="472" fill="none" stroke="#e01010" strokeWidth="2" />
        <rect x="1073.500" y="123" width="736" height="140" fill="none" stroke="#e01010" strokeWidth="2" />
        <rect x="1058" y="519" width="784" height="314" fill="none" stroke="#e01010" strokeWidth="2" />
        <ellipse cx="768" cy="554" rx="175" ry="145" fill="none" stroke="#e01010" strokeWidth="2" />
        <polygon points="926,487 947,483 944,489 1445,606 1445,609 941,496 942,499" fill="#ff0000" />
        <polygon points="1202,611 1428,651 1429,647 1448,657 1425,663 1427,659 1202,613" fill="#ff0000" />
        <path d="M1446,607 L1602,682 L1607,750 L1452,677 M1446,607 L1452,699" fill="none" stroke="#f01010" strokeWidth="2.500" />
      </Overlay>
    </Page>
  );
}
